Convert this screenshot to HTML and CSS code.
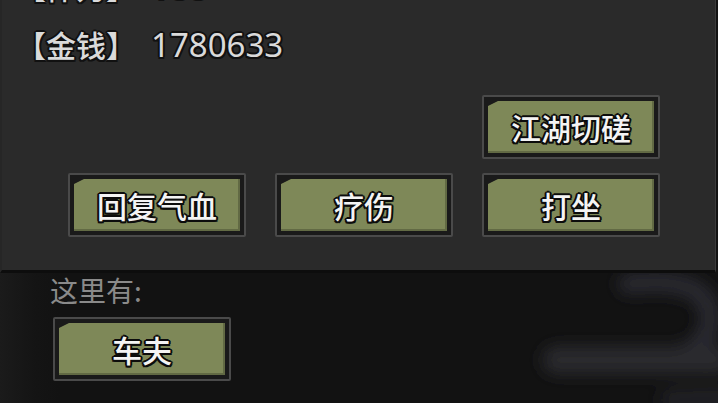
FILE: index.html
```html
<!DOCTYPE html>
<html lang="zh-CN">
<head>
    <meta charset="UTF-8">
    <meta name="viewport" content="width=device-width, initial-scale=1.0">
    <title>江湖</title>
    <link rel="stylesheet" href="styles.css">
</head>
<body>
  <div class="screen">
    <section class="panel">
        <div class="stats">
            <div class="stat"><span class="stat-key">【体力】</span><span class="stat-val">100</span></div>
            <div class="stat"><span class="stat-key">【金钱】</span><span class="stat-val">1780633</span></div>
        </div>
        <div class="actions">
            <button class="btn btn-spar"><span class="btn-face">江湖切磋</span></button>
            <button class="btn"><span class="btn-face">回复气血</span></button>
            <button class="btn"><span class="btn-face">疗伤</span></button>
            <button class="btn"><span class="btn-face">打坐</span></button>
        </div>
    </section>

    <section class="scene">
        <svg class="smoke" viewBox="0 273 718 130" preserveAspectRatio="none">
            <defs>
                <filter id="blur" filterUnits="userSpaceOnUse" x="400" y="240" width="360" height="200">
                    <feGaussianBlur stdDeviation="8"/>
                </filter>
            </defs>
            <g filter="url(#blur)" fill="none" stroke-linecap="round">
                <path d="M 628 284 Q 700 276 709 308 Q 714 340 690 350" stroke="#2c2c31" stroke-width="20"/>
                <path d="M 556 360 L 716 360" stroke="#29292e" stroke-width="28"/>
                <path d="M 670 400 L 720 398" stroke="#232327" stroke-width="20"/>
            </g>
        </svg>
        <p class="scene-title">这里有:</p>
        <div class="npcs">
            <button class="btn"><span class="btn-face">车夫</span></button>
        </div>
    </section>
  </div>
</body>
</html>
```

FILE: styles.css
```css
body { margin: 0; background: #121212; font-family: "Noto Sans CJK SC", "Noto Sans", sans-serif; }
.screen { width: 718px; height: 403px; overflow: hidden; background: linear-gradient(to right, #1b1b1b 0, #141414 36px, #121212 60px); }

.panel { width: 716px; height: 273px; box-sizing: border-box; background: #2a2a2a; border-left: 2px solid #262626; border-right: 1px solid #3a3a3a; border-bottom: 3px solid #0d0d0d; overflow: hidden; }
.stats { margin-top: -43px; padding-left: 14px; }
.stat { display: flex; align-items: baseline; height: 58px; line-height: 58px; color: #dadada; font-size: 30px; font-weight: 500;
    text-shadow: -2px 0 #111, 2px 0 #111, 0 -2px #111, 0 2px #111, -1.5px -1.5px #111, 1.5px -1.5px #111, -1.5px 1.5px #111, 1.5px 1.5px #111; }
.stat-val { margin-left: 15px; font-family: "Noto Sans", sans-serif; font-size: 33px; font-weight: 400; }

.actions { display: grid; grid-template-columns: repeat(3, 178px); column-gap: 29px; row-gap: 14px; margin-top: 22px; padding-left: 66px; }
.btn-spar { grid-column: 3; }

.btn { display: flex; width: 178px; height: 64px; box-sizing: border-box; margin: 0; padding: 4px; border: 2px solid #4a4a4a; border-radius: 2px; background: #1a1a1a; cursor: pointer; }
.btn-face { flex: 1; display: flex; align-items: center; justify-content: center; background: #7e8858;
    clip-path: polygon(10px 0, 100% 0, 100% 100%, 0 100%, 0 5px);
    box-shadow: inset -2px -2px 0 rgba(0, 0, 0, 0.22);
    color: #f4f4f4; font-family: "Noto Sans CJK SC", sans-serif; font-size: 30px; font-weight: 500; line-height: 1;
    text-shadow: -2px 0 #0c0c0c, 2px 0 #0c0c0c, 0 -2px #0c0c0c, 0 2px #0c0c0c, -1.5px -1.5px #0c0c0c, 1.5px -1.5px #0c0c0c, -1.5px 1.5px #0c0c0c, 1.5px 1.5px #0c0c0c; }

.scene { position: relative; height: 130px; }
.smoke { position: absolute; left: 0; top: 0; width: 718px; height: 130px; }
.scene-title { position: relative; margin: 0; padding-left: 50px; line-height: 34px; font-size: 28px; color: #8a8a8a; }
.npcs { position: relative; margin-top: 10px; padding-left: 53px; }
```
